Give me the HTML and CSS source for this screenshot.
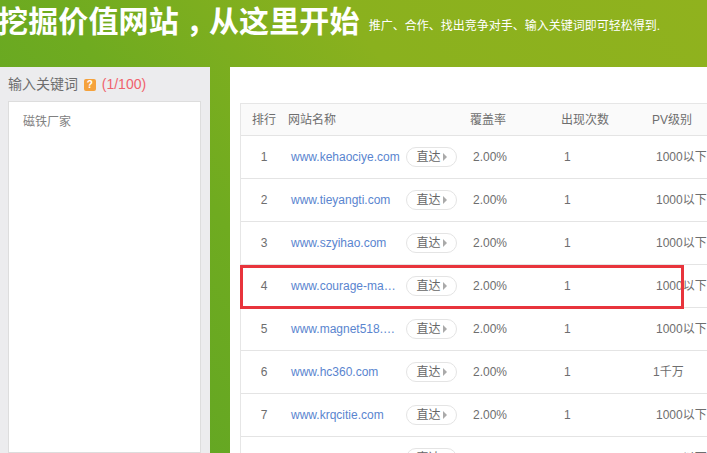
FILE: index.html
```html
<!DOCTYPE html>
<html lang="zh">
<head>
<meta charset="utf-8">
<title>挖掘价值网站</title>
<link rel="stylesheet" href="styles.css">
</head>
<body>
<header class="hero">
  <h1 class="hero-title">挖掘价值网站<span class="comma">，</span>从这里开始</h1>
  <p class="hero-sub">推广、合作、找出竞争对手、输入关键词即可轻松得到.</p>
</header>
<main class="content">
  <aside class="side">
    <div class="side-label">输入关键词 <span class="help">?</span> <span class="count">(1/100)</span></div>
    <div class="side-box">磁铁厂家</div>
  </aside>
  <section class="panel">
    <div class="table">
      <div class="row head">
        <span class="c-rank">排行</span>
        <span class="c-name">网站名称</span>
        <span class="c-cover">覆盖率</span>
        <span class="c-times">出现次数</span>
        <span class="c-pv">PV级别</span>
      </div>
      <div class="row">
        <span class="c-rank">1</span><a class="c-name link">www.kehaociye.com</a>
        <span class="go">直达<i class="arrow"></i></span>
        <span class="c-cover">2.00%</span><span class="c-times">1</span><span class="c-pv">1000以下</span>
      </div>
      <div class="row">
        <span class="c-rank">2</span><a class="c-name link">www.tieyangti.com</a>
        <span class="go">直达<i class="arrow"></i></span>
        <span class="c-cover">2.00%</span><span class="c-times">1</span><span class="c-pv">1000以下</span>
      </div>
      <div class="row">
        <span class="c-rank">3</span><a class="c-name link">www.szyihao.com</a>
        <span class="go">直达<i class="arrow"></i></span>
        <span class="c-cover">2.00%</span><span class="c-times">1</span><span class="c-pv">1000以下</span>
      </div>
      <div class="row marked">
        <span class="c-rank">4</span><a class="c-name link">www.courage-magnet.com</a>
        <span class="go">直达<i class="arrow"></i></span>
        <span class="c-cover">2.00%</span><span class="c-times">1</span><span class="c-pv">1000以下</span>
        <span class="redbox"></span>
      </div>
      <div class="row">
        <span class="c-rank">5</span><a class="c-name link">www.magnet518.com.cn</a>
        <span class="go">直达<i class="arrow"></i></span>
        <span class="c-cover">2.00%</span><span class="c-times">1</span><span class="c-pv">1000以下</span>
      </div>
      <div class="row">
        <span class="c-rank">6</span><a class="c-name link">www.hc360.com</a>
        <span class="go">直达<i class="arrow"></i></span>
        <span class="c-cover">2.00%</span><span class="c-times">1</span><span class="c-pv pv-short">1千万</span>
      </div>
      <div class="row">
        <span class="c-rank">7</span><a class="c-name link">www.krqcitie.com</a>
        <span class="go">直达<i class="arrow"></i></span>
        <span class="c-cover">2.00%</span><span class="c-times">1</span><span class="c-pv">1000以下</span>
      </div>
      <div class="row">
        <span class="c-rank">8</span><a class="c-name link">www.cixi.com</a>
        <span class="go">直达<i class="arrow"></i></span>
        <span class="c-cover">2.00%</span><span class="c-times">1</span><span class="c-pv">1000以下</span>
      </div>
    </div>
  </section>
</main>
</body>
</html>
```
FILE: styles.css
```css
* { box-sizing: border-box; }
html, body { height: 100%; }
body {
  margin: 0;
  width: 707px;
  height: 453px;
  overflow: hidden;
  display: flex;
  flex-direction: column;
  font-family: "Liberation Sans", "Noto Sans CJK SC", sans-serif;
  font-size: 12px;
  color: #6e6e6e;
  background: linear-gradient(232deg, #90b21e 0%, #8ab11e 35%, #6fab20 62%, #5aa326 100%);
}
.hero {
  flex: none;
  height: 67px;
  display: flex;
  align-items: flex-start;
  margin-left: -2px;
  color: #fff;
}
.hero-title {
  margin: 2px 0 0;
  font-size: 30px;
  line-height: 40px;
  font-weight: 700;
  letter-spacing: 0.15px;
  white-space: nowrap;
}
.comma {
  display: inline-block;
  width: 30px;
  padding-left: 7px;
}
.hero-sub {
  margin: 17px 0 0 9px;
  font-size: 12px;
  line-height: 18px;
  white-space: nowrap;
}
.content {
  flex: 1;
  min-height: 0;
  display: flex;
  gap: 20px;
}
.side {
  flex: none;
  width: 210px;
  padding: 8px 9px 0 8px;
  background: #ececee;
  display: flex;
  flex-direction: column;
}
.side-label {
  height: 26px;
  font-size: 14px;
  line-height: 19px;
  color: #6e6e6e;
  white-space: nowrap;
}
.help {
  display: inline-block;
  width: 12px;
  height: 12px;
  margin: 0 2px;
  border-radius: 2px;
  background: #f5a23c;
  color: #fff;
  font-size: 10px;
  font-weight: 700;
  line-height: 12px;
  text-align: center;
  vertical-align: 1px;
}
.count { color: #f0626c; }
.side-box {
  flex: 1;
  padding: 12px 14px;
  background: #fff;
  border: 1px solid #ddd;
  font-size: 12px;
  line-height: 16px;
  color: #808080;
}
.panel {
  flex: 1;
  min-width: 0;
  padding: 36px 0 0 10px;
  background: #fff;
  overflow: hidden;
}
.table {
  width: 480px;
  border-left: 1px solid #e6e6e6;
}
.row {
  position: relative;
  height: 43px;
  display: grid;
  grid-template-columns: 47px 118px 51px 16px 87px 93px 80px;
  grid-template-areas: "rank name go . cover times pv";
  align-items: center;
  line-height: 16px;
  border-bottom: 1px solid #e4e4e4;
}
.head {
  height: 33px;
  background: #fafafa;
  border-top: 1px solid #e6e6e6;
  grid-template-columns: 47px 182px 91px 91px 80px;
  grid-template-areas: "rank name cover times pv";
}
.c-rank { grid-area: rank; text-align: center; padding-right: 1px; }
.c-name { grid-area: name; padding: 0 6px 0 3px; white-space: nowrap; overflow: hidden; text-overflow: ellipsis; }
.head .c-name { padding: 0; }
.link { color: #5a85cf; }
.go {
  grid-area: go;
  height: 20px;
  display: flex;
  align-items: center;
  justify-content: center;
  gap: 2px;
  border: 1px solid #e4e4e4;
  border-radius: 10px;
  color: #666;
  line-height: 18px;
}
.arrow {
  width: 0;
  height: 0;
  border-left: 4px solid #aaa;
  border-top: 4px solid transparent;
  border-bottom: 4px solid transparent;
}
.c-cover { grid-area: cover; }
.c-times { grid-area: times; padding-left: 4px; }
.head .c-times { padding-left: 0; }
.c-pv { grid-area: pv; white-space: nowrap; padding-left: 3px; }
.head .c-pv { padding-left: 0; }
.row > .pv-short { padding-left: 0; }
.redbox {
  position: absolute;
  left: -1px;
  top: 0;
  width: 444px;
  height: 44px;
  border: 3px solid #e8343c;
}
```
